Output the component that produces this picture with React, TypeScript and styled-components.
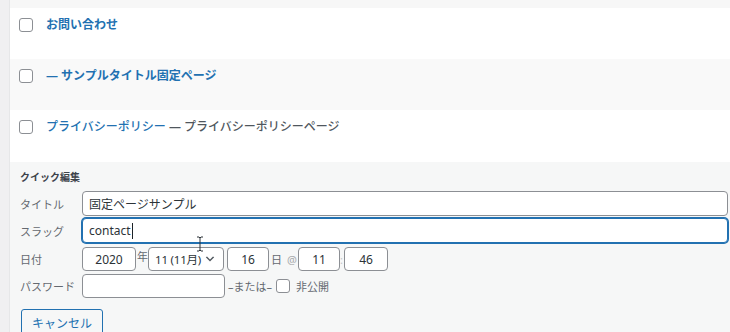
import React from 'react';
import styled, { createGlobalStyle } from 'styled-components';

const GlobalStyle = createGlobalStyle`
  body {
    margin: 0;
    background: #f0f0f1;
    font-family: "Noto Sans", "Noto Sans CJK JP", sans-serif;
    color: #3c434a;
  }
`;

// ページ全体
const Page = styled.div`
  width: 730px;
  height: 332px;
  overflow: hidden;
  padding-left: 9px;
  box-sizing: border-box;
`;

const Table = styled.div`
  border-left: 1px solid #e6e7e8;
  background: #fff;
  display: flex;
  flex-direction: column;
`;

const TopStripe = styled.div`
  height: 8px;
  background: #f7f7f7;
`;

const Row = styled.div<{ $striped?: boolean; $h: number }>`
  height: ${p => p.$h}px;
  background: ${p => (p.$striped ? '#f9f9f9' : '#fff')};
  display: flex;
  align-items: flex-start;
  padding-left: 9px;
`;

const Check = styled.span`
  display: inline-block;
  box-sizing: border-box;
  width: 14px;
  height: 14px;
  border: 1px solid #8c8f94;
  border-radius: 3px;
  background: #fff;
  flex: none;
`;

const RowCheck = styled(Check)`
  margin-top: 10px;
`;

const RowTitle = styled.div`
  margin-left: 13px;
  padding-top: 7px;
  line-height: 20px;
  font-size: 12px;
  white-space: nowrap;
`;

const TitleLink = styled.a<{ $weight?: number }>`
  color: #2271b1;
  font-weight: ${p => p.$weight ?? 700};
  text-decoration: none;
`;

const PostState = styled.span`
  color: #50575e;
  font-weight: 500;
`;

// クイック編集
const QuickEdit = styled.div`
  position: relative;
  background: #f6f7f7;
  padding: 7px 2px 0 10px;
  height: 180px;
`;

const Legend = styled.div`
  font-size: 10px;
  font-weight: 700;
  line-height: 16px;
  color: #3c434a;
  margin-bottom: 6px;
`;

const Form = styled.div`
  display: grid;
  grid-template-columns: 62px 1fr;
  align-items: center;
`;

const Label = styled.div<{ $mt?: number }>`
  font-size: 11px;
  color: #646970;
  margin-top: ${p => p.$mt ?? 0}px;
`;

const FieldRow = styled.div<{ $mt?: number }>`
  display: flex;
  align-items: center;
  margin-top: ${p => p.$mt ?? 0}px;
`;

const TextBox = styled.div<{ $h?: number; $w?: number; $focus?: boolean; $center?: boolean }>`
  box-sizing: border-box;
  height: ${p => p.$h ?? 24}px;
  width: ${p => (p.$w ? `${p.$w}px` : '100%')};
  flex: ${p => (p.$w ? 'none' : '1')};
  background: #fff;
  border: 1px solid ${p => (p.$focus ? '#2271b1' : '#8c8f94')};
  box-shadow: ${p => (p.$focus ? '0 0 0 1px #2271b1' : 'none')};
  border-radius: 4px;
  padding: 0 6px;
  display: flex;
  align-items: center;
  justify-content: ${p => (p.$center ? 'center' : 'flex-start')};
  font-size: 12px;
  color: #2c3338;
  white-space: nowrap;
`;

const Caret = styled.span`
  display: inline-block;
  width: 1px;
  height: 16px;
  background: #1d2327;
  margin-left: 1px;
`;

const SelectBox = styled(TextBox)`
  justify-content: space-between;
  padding: 0 7px 0 6px;
  font-size: 11.5px;
  letter-spacing: -0.2px;
`;

const Sep = styled.span<{ $w: number; $pl?: number; $raise?: number; $color?: string }>`
  display: inline-block;
  box-sizing: border-box;
  width: ${p => p.$w}px;
  padding-left: ${p => p.$pl ?? 0}px;
  flex: none;
  font-size: 11px;
  color: ${p => p.$color ?? '#646970'};
  position: relative;
  top: ${p => -(p.$raise ?? 0)}px;
  white-space: nowrap;
`;

const At = styled.span`
  color: #a7aaad;
  margin-left: 5px;
`;

const PrivateCheck = styled(Check)`
  margin: 0 6px 0 0;
`;

const CancelButton = styled.button`
  margin: 11px 0 0 1px;
  box-sizing: border-box;
  height: 30px;
  padding: 0 10px;
  border: 1px solid #2271b1;
  border-radius: 3px;
  background: #f6f7f7;
  color: #2271b1;
  font-family: inherit;
  font-size: 12px;
  line-height: 28px;
  display: block;
`;

const IBeam = styled.svg`
  position: absolute;
  left: 186px;
  top: 74px;
`;

const Chevron = () => (
  <svg width="12" height="12" viewBox="0 0 20 20">
    <path d="M5 6l5 5 5-5 2 1-7 7-7-7 2-1z" fill="#50575e" />
  </svg>
);

const App: React.FC = () => {
  return (
    <>
      <GlobalStyle />
      <Page>
        <Table>
          <TopStripe />
          <Row $h={51}>
            <RowCheck />
            <RowTitle>
              <TitleLink>お問い合わせ</TitleLink>
            </RowTitle>
          </Row>
          <Row $h={51} $striped>
            <RowCheck />
            <RowTitle>
              <TitleLink>— サンプルタイトル固定ページ</TitleLink>
            </RowTitle>
          </Row>
          <Row $h={52}>
            <RowCheck />
            <RowTitle>
              <TitleLink $weight={500}>プライバシーポリシー</TitleLink>
              <PostState> — プライバシーポリシーページ</PostState>
            </RowTitle>
          </Row>
          <QuickEdit>
            <Legend>クイック編集</Legend>
            <Form>
              <Label>タイトル</Label>
              <FieldRow>
                <TextBox $h={25}>固定ページサンプル</TextBox>
              </FieldRow>

              <Label $mt={2}>スラッグ</Label>
              <FieldRow $mt={2}>
                <TextBox $h={25} $focus>
                  contact<Caret />
                </TextBox>
              </FieldRow>

              <Label $mt={4}>日付</Label>
              <FieldRow $mt={4}>
                <TextBox $w={54} $center>2020</TextBox>
                <Sep $w={12} $pl={1} $raise={3}>年</Sep>
                <SelectBox $w={76}>
                  <span>11 (11月)</span>
                  <Chevron />
                </SelectBox>
                <Sep $w={3} />
                <TextBox $w={42} $center>16</TextBox>
                <Sep $w={29} $pl={2}>
                  日<At>@</At>
                </Sep>
                <TextBox $w={42} $center>11</TextBox>
                <Sep $w={4} $color="#c3c4c7">:</Sep>
                <TextBox $w={44} $center>46</TextBox>
              </FieldRow>

              <Label $mt={3}>パスワード</Label>
              <FieldRow $mt={3}>
                <TextBox $w={143} />
                <Sep $w={51} $pl={3}>–または–</Sep>
                <PrivateCheck />
                <Sep $w={40}>非公開</Sep>
              </FieldRow>
            </Form>
            <CancelButton>キャンセル</CancelButton>
            <IBeam width="8" height="16" viewBox="0 0 8 16">
              <path d="M1 1h2l1 1 1-1h2M4 2v12M1 15h2l1-1 1 1h2" stroke="#2c3338" strokeWidth="1" fill="none" />
            </IBeam>
          </QuickEdit>
        </Table>
      </Page>
    </>
  );
};

export default App;
